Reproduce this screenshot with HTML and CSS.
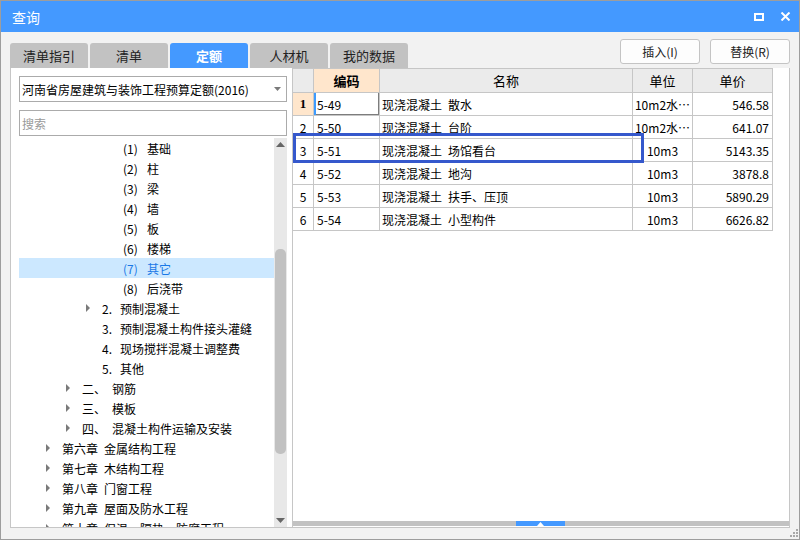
FILE: index.html
```html
<!DOCTYPE html>
<html lang="zh-CN">
<head>
<meta charset="utf-8">
<title>查询</title>
<link rel="stylesheet" href="styles.css">
</head>
<body>
<div class="win">
  <div class="titlebar">
    <span class="title">查询</span>
    <div class="tb-icons">
      <svg class="ico-max" width="10" height="8" viewBox="0 0 10 8"><rect x="1" y="1" width="8" height="6" fill="none" stroke="#fff" stroke-width="2"/></svg>
      <svg class="ico-close" width="11" height="9" viewBox="0 0 11 9"><path d="M1.5 0.5 L9.5 8.5 M9.5 0.5 L1.5 8.5" stroke="#fff" stroke-width="2" fill="none"/></svg>
    </div>
  </div>

  <div class="toolbar">
    <div class="tabs">
      <div class="tab">清单指引</div>
      <div class="tab">清单</div>
      <div class="tab active">定额</div>
      <div class="tab">人材机</div>
      <div class="tab">我的数据</div>
    </div>
    <div class="btns">
      <button class="btn">插入(I)</button>
      <button class="btn">替换(R)</button>
    </div>
  </div>

  <div class="panel">
    <div class="left">
      <div class="select">
        <span>河南省房屋建筑与装饰工程预算定额(2016)</span>
        <svg class="sel-arrow" width="7" height="4" viewBox="0 0 7 4"><path d="M0 0 H7 L3.5 4 Z" fill="#7a7a7a"/></svg>
      </div>
      <div class="search">搜索</div>
      <div class="treewrap">
        <div class="tree">
          <div class="row l4"><span class="arrow"></span><span class="n">(1)</span>基础</div>
          <div class="row l4"><span class="arrow"></span><span class="n">(2)</span>柱</div>
          <div class="row l4"><span class="arrow"></span><span class="n">(3)</span>梁</div>
          <div class="row l4"><span class="arrow"></span><span class="n">(4)</span>墙</div>
          <div class="row l4"><span class="arrow"></span><span class="n">(5)</span>板</div>
          <div class="row l4"><span class="arrow"></span><span class="n">(6)</span>楼梯</div>
          <div class="row l4 sel"><span class="arrow"></span><span class="n">(7)</span>其它</div>
          <div class="row l4"><span class="arrow"></span><span class="n">(8)</span>后浇带</div>
          <div class="row l3"><span class="arrow on"></span><span class="n">2.</span>预制混凝土</div>
          <div class="row l3"><span class="arrow"></span><span class="n">3.</span>预制混凝土构件接头灌缝</div>
          <div class="row l3"><span class="arrow"></span><span class="n">4.</span>现场搅拌混凝土调整费</div>
          <div class="row l3"><span class="arrow"></span><span class="n">5.</span>其他</div>
          <div class="row l2"><span class="arrow on"></span><span class="n">二、</span>钢筋</div>
          <div class="row l2"><span class="arrow on"></span><span class="n">三、</span>模板</div>
          <div class="row l2"><span class="arrow on"></span><span class="n">四、</span>混凝土构件运输及安装</div>
          <div class="row l1"><span class="arrow on"></span><span class="n">第六章</span>金属结构工程</div>
          <div class="row l1"><span class="arrow on"></span><span class="n">第七章</span>木结构工程</div>
          <div class="row l1"><span class="arrow on"></span><span class="n">第八章</span>门窗工程</div>
          <div class="row l1"><span class="arrow on"></span><span class="n">第九章</span>屋面及防水工程</div>
          <div class="row l1"><span class="arrow on"></span><span class="n">第十章</span>保温、隔热、防腐工程</div>
        </div>
        <div class="vscroll">
          <svg class="sb-up" width="9" height="5" viewBox="0 0 9 5"><path d="M0 5 L4.5 0 L9 5 Z" fill="#666"/></svg>
          <div class="thumb"></div>
          <svg class="sb-down" width="9" height="5" viewBox="0 0 9 5"><path d="M0 0 L9 0 L4.5 5 Z" fill="#666"/></svg>
        </div>
      </div>
    </div>

    <div class="right">
      <div class="grid">
        <div class="c h"></div>
        <div class="c h code">编码</div>
        <div class="c h">名称</div>
        <div class="c h">单位</div>
        <div class="c h">单价</div>

        <div class="c rn cur">1</div>
        <div class="c cd edit">5-49</div>
        <div class="c nm">现浇混凝土&ensp;散水</div>
        <div class="c un">10m2水…</div>
        <div class="c pr">546.58</div>

        <div class="c rn">2</div>
        <div class="c cd">5-50</div>
        <div class="c nm">现浇混凝土&ensp;台阶</div>
        <div class="c un">10m2水…</div>
        <div class="c pr">641.07</div>

        <div class="c rn">3</div>
        <div class="c cd">5-51</div>
        <div class="c nm">现浇混凝土&ensp;场馆看台</div>
        <div class="c un">10m3</div>
        <div class="c pr">5143.35</div>

        <div class="c rn">4</div>
        <div class="c cd">5-52</div>
        <div class="c nm">现浇混凝土&ensp;地沟</div>
        <div class="c un">10m3</div>
        <div class="c pr">3878.8</div>

        <div class="c rn">5</div>
        <div class="c cd">5-53</div>
        <div class="c nm">现浇混凝土&ensp;扶手、压顶</div>
        <div class="c un">10m3</div>
        <div class="c pr">5890.29</div>

        <div class="c rn">6</div>
        <div class="c cd">5-54</div>
        <div class="c nm">现浇混凝土&ensp;小型构件</div>
        <div class="c un">10m3</div>
        <div class="c pr">6626.82</div>
      </div>
      <div class="hbar">
        <div class="hthumb"><svg width="7" height="4" viewBox="0 0 7 4"><path d="M0 4 L3.5 0 L7 4 Z" fill="#fff"/></svg></div>
      </div>
      <div class="annot"></div>
    </div>
  </div>

  <div class="footer">
    <svg width="8" height="8" viewBox="0 0 8 8" fill="#a8a8a8">
      <rect x="6" y="0" width="2" height="2"/>
      <rect x="3" y="3" width="2" height="2"/><rect x="6" y="3" width="2" height="2"/>
      <rect x="0" y="6" width="2" height="2"/><rect x="3" y="6" width="2" height="2"/><rect x="6" y="6" width="2" height="2"/>
    </svg>
  </div>
</div>
</body>
</html>
```

FILE: styles.css
```css
* { box-sizing: border-box; }
html, body { margin: 0; padding: 0; }
body {
  width: 800px;
  height: 540px;
  overflow: hidden;
  font-family: "Noto Sans CJK SC", "Liberation Sans", sans-serif;
  font-size: 12px;
  color: #000;
  background: #f2f2f2;
}

.win {
  width: 800px;
  height: 540px;
  border: 1px solid #9d9d9d;
  background: #f2f2f2;
  display: flex;
  flex-direction: column;
}

/* title bar */
.titlebar {
  flex: none;
  height: 31px;
  background: #4499ff;
  color: #fff;
  display: flex;
  align-items: center;
  padding-left: 11px;
}
.title { flex: 1; font-size: 14px; }
.tb-icons {
  display: flex;
  align-items: center;
  gap: 16px;
  padding-right: 8px;
}
.tb-icons svg { display: block; }

/* toolbar */
.toolbar {
  flex: none;
  height: 36px;
  display: flex;
  justify-content: space-between;
  align-items: flex-start;
  padding: 0 9px;
}
.tabs {
  align-self: flex-end;
  display: flex;
  gap: 2px;
}
.tab {
  width: 78px;
  height: 25px;
  background: #c2c2c2;
  border-radius: 3px 3px 0 0;
  display: flex;
  align-items: center;
  justify-content: center;
  font-size: 13px;
  color: #222;
}
.tab.active { background: #4499ff; color: #fff; font-weight: bold; }
.btns { display: flex; gap: 10px; margin-top: 7px; }
.btn {
  width: 80px;
  height: 25px;
  padding: 0;
  border: 1px solid #c4c4c4;
  border-radius: 3px;
  background: #fdfdfd;
  font-family: "Noto Sans CJK SC", "Liberation Sans", sans-serif;
  font-size: 12px;
  color: #222;
}

/* main panel */
.panel {
  flex: none;
  height: 460px;
  margin: 0 9px;
  display: flex;
  background: #fff;
  border: 1px solid #c6c6c6;
  border-top: none;
}
.left {
  width: 282px;
  border-right: 1px solid #c6c6c6;
  padding: 8px 5px 0 8px;
  display: flex;
  flex-direction: column;
}
.select {
  height: 26px;
  border: 1px solid #ababab;
  display: flex;
  align-items: center;
  justify-content: space-between;
  padding-left: 2px;
  white-space: nowrap;
}
.sel-arrow { margin-right: 5px; }
.search {
  height: 26px;
  margin-top: 8px;
  border: 1px solid #ababab;
  display: flex;
  align-items: center;
  padding-left: 2px;
  color: #9a9a9a;
}
.treewrap {
  flex: 1;
  min-height: 0;
  margin-top: 2px;
  display: flex;
}
.tree { flex: 1; overflow: hidden; }
.row {
  height: 20px;
  display: flex;
  align-items: center;
  white-space: nowrap;
}
.row.l1 { padding-left: 27px; }
.row.l2 { padding-left: 47px; }
.row.l3 { padding-left: 67px; }
.row.l4 { padding-left: 88px; }
.row.sel { background: #cce8ff; color: #1a78e6; }
.arrow {
  width: 16px;
  height: 20px;
  display: flex;
  align-items: center;
}
.arrow.on::before {
  content: "";
  width: 0;
  height: 0;
  border-left: 4px solid #7a7a7a;
  border-top: 4px solid transparent;
  border-bottom: 4px solid transparent;
}
.n { display: inline-block; }
.l4 .n { width: 24px; }
.l3 .n { width: 18px; }
.l2 .n { width: 30px; }
.l1 .n { width: 42px; }

.vscroll {
  width: 13px;
  background: #e8e8e8;
  display: flex;
  flex-direction: column;
  align-items: center;
}
.sb-up { margin-top: 4px; flex: none; }
.thumb {
  margin-top: 102px;
  width: 11px;
  height: 205px;
  border-radius: 5px;
  background: #c1c1c1;
}
.sb-down { margin-top: auto; margin-bottom: 4px; flex: none; }

/* right grid */
.right {
  flex: 1;
  position: relative;
  display: flex;
  flex-direction: column;
}
.grid {
  width: 480px;
  display: grid;
  grid-template-columns: 21px 66px 253px 60px 80px;
  grid-auto-rows: 23px;
  grid-template-rows: 24px;
  border-top: 1px solid #c6c6c6;
}
.c {
  border-right: 1px solid #c6c6c6;
  border-bottom: 1px solid #c6c6c6;
  display: flex;
  align-items: center;
  white-space: nowrap;
  overflow: hidden;
  padding: 0 2px;
}
.h {
  background: #ebebeb;
  justify-content: center;
  font-size: 13px;
}
.h.code { background: #ffe6cc; font-weight: bold; }
.rn { justify-content: center; padding: 0; }
.rn.cur {
  background: #ffe6cc;
  font-weight: bold;
  font-family: "Liberation Serif", serif;
  font-size: 13px;
}
.cd { padding-left: 3px; }
.cd.edit { box-shadow: inset 2px 0 0 #3d9bff, inset -1px -1px 0 #7d7d7d; }
.nm { padding-left: 2px; }
.un { justify-content: center; padding: 0; }
.pr { justify-content: flex-end; padding-right: 3px; }

.hbar {
  margin-top: auto;
  margin-bottom: 1px;
  height: 5px;
  background: #c2c2c2;
  display: flex;
}
.hthumb {
  margin-left: 223px;
  width: 49px;
  height: 5px;
  background: #4499ff;
  display: flex;
  align-items: center;
  justify-content: center;
}
.hthumb svg { display: block; }

.annot {
  position: absolute;
  left: 0;
  top: 65px;
  width: 351px;
  height: 30px;
  border: 3px solid #3558cc;
}

.footer {
  flex: 1;
  display: flex;
  justify-content: flex-end;
  align-items: flex-end;
  padding: 0 1px 2px 0;
}
.footer svg { display: block; }
```
